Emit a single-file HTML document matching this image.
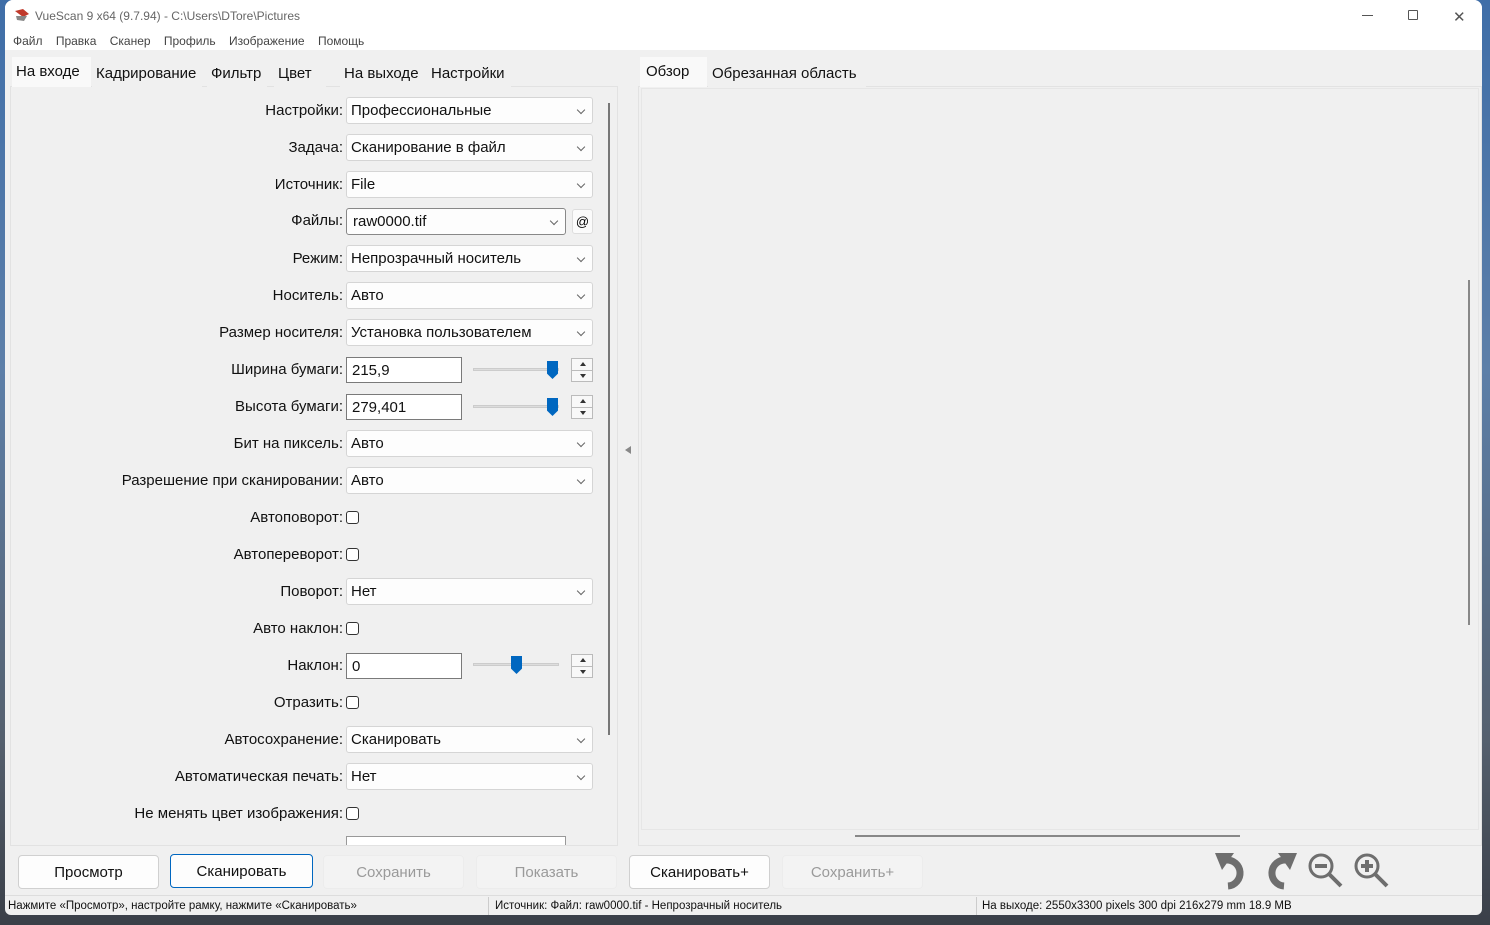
<!DOCTYPE html>
<html><head><meta charset="utf-8"><style>
*{box-sizing:border-box;margin:0;padding:0}
body{width:1490px;height:925px;position:relative;overflow:hidden;font-family:"Liberation Sans","DejaVu Sans",sans-serif;background:linear-gradient(180deg,#3f6ea8 0%,#5d7fa8 40%,#55606e 80%,#3a3f48 100%)}
.a{position:absolute}
#win{left:5px;top:0;width:1477px;height:915px;background:#f0f0f0;border-radius:8px 8px 6px 6px;overflow:hidden}
.title{left:0;top:0;width:100%;height:50px;background:#fff}
.t{font-size:12px;color:#666;white-space:nowrap}
.lbl{font-size:15px;color:#111;white-space:nowrap;text-align:right;width:340px;left:0}
.dd{height:27px;background:#fdfdfd;border:1px solid #d5d5d5;border-radius:3px;font-size:15px;color:#111;padding:4px 0 0 4px;white-space:nowrap}
.dd:after{content:"";position:absolute;right:8px;top:9px;width:5px;height:5px;border-right:1px solid #666;border-bottom:1px solid #666;transform:rotate(45deg)}
.ed{height:26px;background:#fff;border:1px solid #7a7a7a;font-size:15px;color:#111;padding:4px 0 0 5px}
.cb{width:13px;height:13px;border:1px solid #333;border-radius:3px;background:#fff}
.tab{font-size:15px;color:#111;height:29px;padding:6px 0 0 4px;background:#f0f0f0;white-space:nowrap}
.btn{height:34px;border:1px solid #d0d0d0;border-radius:4px;background:#fdfdfd;font-size:15px;color:#111;text-align:center;padding-top:8px}
.dis{color:#9a9a9a;background:#f3f3f3;border-color:#ececec}
.spin{width:22px;height:24px;border:1px solid #bbb;background:#f8f8f8}
.spin:before{content:"";position:absolute;left:0;right:0;top:11px;border-top:1px solid #bbb}
.spin i{position:absolute;left:8px;width:0;height:0;border-left:3px solid transparent;border-right:3px solid transparent}
.sl{height:3px;background:#ddd;border:1px solid #ccc}
.th{width:11px;height:18px;background:#0067c0;clip-path:polygon(0 0,100% 0,100% 70%,50% 100%,0 70%)}
.st{font-size:11.5px;color:#111;white-space:nowrap;top:900px}
</style></head><body>
<div id="win" class="a">
<div class="a title"></div>
<svg class="a" style="left:9px;top:8px" width="16" height="14"><path d="M1 3 L9 1 L15 6 L9 9 Z" fill="#c0392b"/><path d="M2 8 L13 8 L10 13 L3 12Z" fill="#888"/></svg>
<div class="a t" style="left:30px;top:9px">VueScan 9 x64 (9.7.94) - C:\Users\DTore\Pictures</div>
<div class="a" style="left:1357px;top:15px;width:11px;border-top:1px solid #555"></div>
<div class="a" style="left:1403px;top:10px;width:10px;height:10px;border:1px solid #555;border-radius:1px"></div>
<div class="a" style="left:1448px;top:8px;font-size:15px;color:#555">✕</div>
<div class="a t" style="left:8px;top:34px;color:#444">Файл&nbsp;&nbsp;&nbsp;&nbsp;Правка&nbsp;&nbsp;&nbsp;&nbsp;Сканер&nbsp;&nbsp;&nbsp;&nbsp;Профиль&nbsp;&nbsp;&nbsp;&nbsp;Изображение&nbsp;&nbsp;&nbsp;&nbsp;Помощь</div>

<div class="a" style="left:5px;top:86px;width:608px;height:760px;background:#f0f0f0;border:1px solid #e2e2e2"></div>
<div class="a tab" style="left:7px;width:79px;background:#f9f9f9;height:30px;top:57px">На входе</div>
<div class="a tab" style="left:87px;top:59px;width:110px">Кадрирование</div>
<div class="a tab" style="left:202px;top:59px;width:60px">Фильтр</div>
<div class="a tab" style="left:269px;top:59px;width:52px">Цвет</div>
<div class="a tab" style="left:335px;top:59px;width:90px">На выходе</div>
<div class="a tab" style="left:422px;top:59px;width:84px">Настройки</div>
<div class="a" style="left:603px;top:103px;width:2px;height:632px;background:#777"></div>

<div class="a lbl" style="top:102px;left:-2px">Настройки:</div><div class="a dd" style="left:341px;top:97px;width:247px">Профессиональные</div>
<div class="a lbl" style="top:139px;left:-2px">Задача:</div><div class="a dd" style="left:341px;top:134px;width:247px">Сканирование в файл</div>
<div class="a lbl" style="top:176px;left:-2px">Источник:</div><div class="a dd" style="left:341px;top:171px;width:247px">File</div>
<div class="a lbl" style="top:212px;left:-2px">Файлы:</div><div class="a dd" style="left:341px;top:208px;width:220px;border-color:#888;padding-left:6px">raw0000.tif</div>
<div class="a" style="left:567px;top:209px;width:21px;height:25px;border:1px solid #ddd;border-radius:3px;background:#fbfbfb;font-size:13px;text-align:center;padding-top:4px">@</div>
<div class="a lbl" style="top:250px;left:-2px">Режим:</div><div class="a dd" style="left:341px;top:245px;width:247px">Непрозрачный носитель</div>
<div class="a lbl" style="top:287px;left:-2px">Носитель:</div><div class="a dd" style="left:341px;top:282px;width:247px">Авто</div>
<div class="a lbl" style="top:324px;left:-2px">Размер носителя:</div><div class="a dd" style="left:341px;top:319px;width:247px">Установка пользователем</div>
<div class="a lbl" style="top:361px;left:-2px">Ширина бумаги:</div><div class="a ed" style="left:341px;top:357px;width:116px">215,9</div>
<div class="a sl" style="left:468px;top:368px;width:86px"></div><div class="a th" style="left:542px;top:361px"></div>
<div class="a spin" style="left:566px;top:358px"><i style="top:3px;border-bottom:4px solid #333"></i><i style="top:15px;border-top:4px solid #333"></i></div>
<div class="a lbl" style="top:398px;left:-2px">Высота бумаги:</div><div class="a ed" style="left:341px;top:394px;width:116px">279,401</div>
<div class="a sl" style="left:468px;top:405px;width:86px"></div><div class="a th" style="left:542px;top:398px"></div>
<div class="a spin" style="left:566px;top:395px"><i style="top:3px;border-bottom:4px solid #333"></i><i style="top:15px;border-top:4px solid #333"></i></div>
<div class="a lbl" style="top:435px;left:-2px">Бит на пиксель:</div><div class="a dd" style="left:341px;top:430px;width:247px">Авто</div>
<div class="a lbl" style="top:472px;left:-2px">Разрешение при сканировании:</div><div class="a dd" style="left:341px;top:467px;width:247px">Авто</div>
<div class="a lbl" style="top:509px;left:-2px">Автоповорот:</div><div class="a cb" style="left:341px;top:511px"></div>
<div class="a lbl" style="top:546px;left:-2px">Автопереворот:</div><div class="a cb" style="left:341px;top:548px"></div>
<div class="a lbl" style="top:583px;left:-2px">Поворот:</div><div class="a dd" style="left:341px;top:578px;width:247px">Нет</div>
<div class="a lbl" style="top:620px;left:-2px">Авто наклон:</div><div class="a cb" style="left:341px;top:622px"></div>
<div class="a lbl" style="top:657px;left:-2px">Наклон:</div><div class="a ed" style="left:341px;top:653px;width:116px">0</div>
<div class="a sl" style="left:468px;top:663px;width:86px"></div><div class="a th" style="left:506px;top:656px"></div>
<div class="a spin" style="left:566px;top:654px"><i style="top:3px;border-bottom:4px solid #333"></i><i style="top:15px;border-top:4px solid #333"></i></div>
<div class="a lbl" style="top:694px;left:-2px">Отразить:</div><div class="a cb" style="left:341px;top:696px"></div>
<div class="a lbl" style="top:731px;left:-2px">Автосохранение:</div><div class="a dd" style="left:341px;top:726px;width:247px">Сканировать</div>
<div class="a lbl" style="top:768px;left:-2px">Автоматическая печать:</div><div class="a dd" style="left:341px;top:763px;width:247px">Нет</div>
<div class="a lbl" style="top:805px;left:-2px">Не менять цвет изображения:</div><div class="a cb" style="left:341px;top:807px"></div>
<div class="a" style="left:341px;top:836px;width:220px;height:9px;background:#fff;border:1px solid #999;border-bottom:none"></div>

<div class="a" style="left:620px;top:446px;width:0;height:0;border-top:4px solid transparent;border-bottom:4px solid transparent;border-right:6px solid #888"></div>

<div class="a" style="left:633px;top:86px;width:844px;height:760px;background:#f0f0f0;border:1px solid #e2e2e2"></div>
<div class="a" style="left:636px;top:88px;width:838px;height:742px;background:#f0f0f0;border:1px solid #e6e6e6"></div>
<div class="a tab" style="left:635px;top:57px;width:67px;height:30px;background:#f9f9f9;padding-left:6px">Обзор</div>
<div class="a tab" style="left:703px;top:59px;width:158px">Обрезанная область</div>
<div class="a" style="left:1463px;top:280px;width:2px;height:345px;background:#888"></div>
<div class="a" style="left:850px;top:835px;width:385px;height:2px;background:#888"></div>

<div class="a btn" style="left:13px;top:855px;width:141px">Просмотр</div>
<div class="a btn" style="left:165px;top:854px;width:143px;border-color:#0067c0">Сканировать</div>
<div class="a btn dis" style="left:318px;top:855px;width:141px">Сохранить</div>
<div class="a btn dis" style="left:471px;top:855px;width:141px">Показать</div>
<div class="a btn" style="left:624px;top:855px;width:141px">Сканировать+</div>
<div class="a btn dis" style="left:777px;top:855px;width:141px">Сохранить+</div>
<svg class="a" style="left:1205px;top:848px" width="190" height="44" fill="none" stroke="#6e6e6e">
<path d="M16 12 A13 13 0 1 1 18 38" stroke-width="7"/><path d="M5 5 L24 5 L12 22Z" fill="#6e6e6e" stroke="none"/>
<path d="M76 12 A13 13 0 1 0 74 38" stroke-width="7"/><path d="M87 5 L68 5 L80 22Z" fill="#6e6e6e" stroke="none"/>
<circle cx="111" cy="18" r="11" stroke-width="3"/><path d="M105 18H117M119 26L131 38" stroke-width="4"/>
<circle cx="157" cy="18" r="11" stroke-width="3"/><path d="M151 18H163M157 12V24M165 26L177 38" stroke-width="4"/>
</svg>

<div class="a" style="left:0;top:895px;width:100%;border-top:1px solid #ddd"></div>
<div class="a st" style="left:3px">Нажмите «Просмотр», настройте рамку, нажмите «Сканировать»</div>
<div class="a" style="left:483px;top:897px;height:18px;border-left:1px solid #ccc"></div>
<div class="a st" style="left:490px">Источник: Файл: raw0000.tif - Непрозрачный носитель</div>
<div class="a" style="left:971px;top:897px;height:18px;border-left:1px solid #ccc"></div>
<div class="a st" style="left:977px">На выходе: 2550x3300 pixels 300 dpi 216x279 mm 18.9 MB</div>
</div>
</body></html>
